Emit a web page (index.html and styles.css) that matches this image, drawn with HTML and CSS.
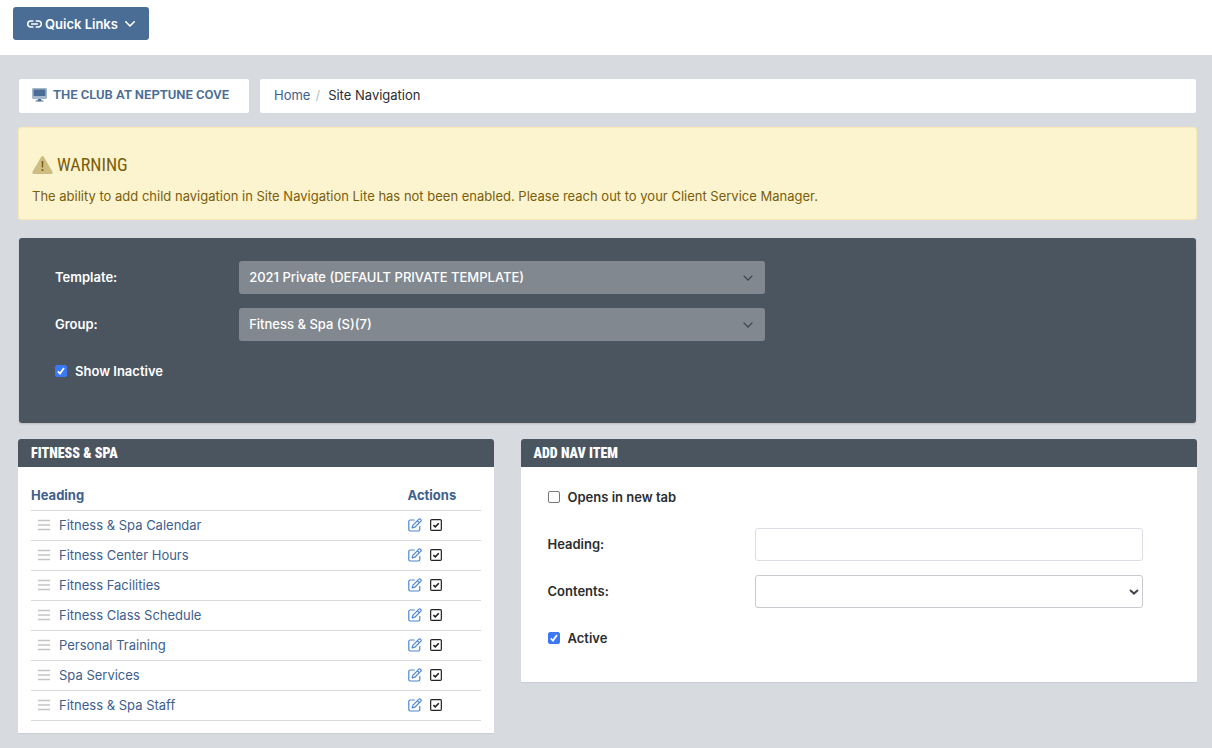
FILE: index.html
```html
<!DOCTYPE html>
<html lang="en">
<head>
<meta charset="utf-8">
<meta name="viewport" content="width=device-width, initial-scale=1">
<title>Site Navigation</title>
<link rel="stylesheet" href="styles.css">
</head>
<body>
<svg class="sprite" aria-hidden="true">
  <symbol id="grip" viewBox="0 0 12 12"><path d="M0 1.5h12M0 6h12M0 10.5h12" stroke="currentColor" stroke-width="1.3" fill="none"/></symbol>
  <symbol id="edit" viewBox="0 0 14 14"><g fill="none" stroke="currentColor" stroke-width="1.2" stroke-linejoin="round" stroke-linecap="round"><path d="M6.3 2H2.2Q.8 2 .8 3.4v8.2Q.8 13 2.2 13h8.2q1.4 0 1.4-1.4V8.4"/><path d="M4.2 9.8l.6-2.5 5.9-5.9q1-1 2 0t0 2L6.8 9.2zM9.4 2.8l1.9 1.9"/></g></symbol>
  <symbol id="check" viewBox="0 0 12 12"><g fill="none" stroke="currentColor"><rect x=".65" y=".65" width="10.7" height="10.7" rx="1.2" stroke-width="1.2"/><path d="M3.4 6.1l1.9 1.8 3.5-3.7" stroke-width="1.6"/></g></symbol>
</svg>

<header class="topbar">
  <button class="quick" type="button">
    <svg width="15" height="8" viewBox="0 0 15 8" fill="none" stroke="currentColor" stroke-width="1.5" stroke-linecap="round"><path d="M5.8 1H3.7a3 3 0 0 0 0 6h2.1M9.2 1h2.1a3 3 0 0 1 0 6H9.2M4.6 4h5.8"/></svg>
    <span>Quick Links</span>
    <svg class="quick-caret" width="10" height="6" viewBox="0 0 10 6" fill="none" stroke="currentColor" stroke-width="1.6" stroke-linecap="round" stroke-linejoin="round"><path d="M.8.8L5 5 9.2.8"/></svg>
  </button>
</header>

<main class="page">
  <div class="crumbs">
    <a class="club" href="#">
      <svg width="15" height="14" viewBox="0 0 15 14"><path fill="#a6b7cb" d="M1.3 0h12.4Q15 0 15 1.3v8.4q0 1.3-1.3 1.3H1.3Q0 11 0 9.700V1.300Q0 0 1.300 0z"/><path fill="#4a6d95" d="M1.600 1.500h11.800V8H1.600zM6 11h3l.5 1.500H11q.5 0 .5.500t-.5.500H4q-.5 0-.5-.500t.5-.500h1.500z"/></svg>
      <span>THE CLUB AT NEPTUNE COVE</span>
    </a>
    <nav class="trail" aria-label="Breadcrumb"><a href="#">Home</a><span class="slash">/</span><span>Site Navigation</span></nav>
  </div>

  <section class="alert">
    <h2 class="alert-title">
      <svg width="21" height="18" viewBox="0 0 21 18"><path fill="#cdbd83" d="M9.100 1q1.400-2 2.800 0l8.600 14.800q.8 1.900-1.200 2.200H1.700q-2-.3-1.200-2.200z"/><path fill="#7a5e0b" d="M9.600 5h1.800l-.3 6.500H9.900zM9.600 13.200h1.800V15H9.600z"/></svg>
      <span>WARNING</span>
    </h2>
    <p class="alert-text">The ability to add child navigation in Site Navigation Lite has not been enabled. Please reach out to your Client Service Manager.</p>
  </section>

  <form class="filters">
    <div class="row">
      <label for="template">Template:</label>
      <div class="field"><select id="template" class="control dark"><option>2021 Private (DEFAULT PRIVATE TEMPLATE)</option></select></div>
    </div>
    <div class="row">
      <label for="group">Group:</label>
      <div class="field"><select id="group" class="control dark"><option>Fitness &amp; Spa (S)(7)</option></select></div>
    </div>
    <label class="tick"><input type="checkbox" checked><span>Show Inactive</span></label>
  </form>

  <div class="columns">
    <section class="card list">
      <h3 class="card-title">FITNESS &amp; SPA</h3>
      <div class="list-body">
        <table class="nav-table">
          <thead><tr><th>Heading</th><th class="actions">Actions</th></tr></thead>
          <tbody>
            <tr><td><svg class="grip"><use href="#grip"/></svg><a href="#">Fitness &amp; Spa Calendar</a></td><td><button type="button" class="icon edit" aria-label="Edit"><svg><use href="#edit"/></svg></button><button type="button" class="icon check" aria-label="Active"><svg><use href="#check"/></svg></button></td></tr>
            <tr><td><svg class="grip"><use href="#grip"/></svg><a href="#">Fitness Center Hours</a></td><td><button type="button" class="icon edit" aria-label="Edit"><svg><use href="#edit"/></svg></button><button type="button" class="icon check" aria-label="Active"><svg><use href="#check"/></svg></button></td></tr>
            <tr><td><svg class="grip"><use href="#grip"/></svg><a href="#">Fitness Facilities</a></td><td><button type="button" class="icon edit" aria-label="Edit"><svg><use href="#edit"/></svg></button><button type="button" class="icon check" aria-label="Active"><svg><use href="#check"/></svg></button></td></tr>
            <tr><td><svg class="grip"><use href="#grip"/></svg><a href="#">Fitness Class Schedule</a></td><td><button type="button" class="icon edit" aria-label="Edit"><svg><use href="#edit"/></svg></button><button type="button" class="icon check" aria-label="Active"><svg><use href="#check"/></svg></button></td></tr>
            <tr><td><svg class="grip"><use href="#grip"/></svg><a href="#">Personal Training</a></td><td><button type="button" class="icon edit" aria-label="Edit"><svg><use href="#edit"/></svg></button><button type="button" class="icon check" aria-label="Active"><svg><use href="#check"/></svg></button></td></tr>
            <tr><td><svg class="grip"><use href="#grip"/></svg><a href="#">Spa Services</a></td><td><button type="button" class="icon edit" aria-label="Edit"><svg><use href="#edit"/></svg></button><button type="button" class="icon check" aria-label="Active"><svg><use href="#check"/></svg></button></td></tr>
            <tr><td><svg class="grip"><use href="#grip"/></svg><a href="#">Fitness &amp; Spa Staff</a></td><td><button type="button" class="icon edit" aria-label="Edit"><svg><use href="#edit"/></svg></button><button type="button" class="icon check" aria-label="Active"><svg><use href="#check"/></svg></button></td></tr>
          </tbody>
        </table>
      </div>
    </section>

    <section class="card add">
      <h3 class="card-title">ADD NAV ITEM</h3>
      <form class="add-body">
        <label class="tick first"><input type="checkbox"><span>Opens in new tab</span></label>
        <div class="row">
          <label for="heading">Heading:</label>
          <div class="field"><input id="heading" type="text" class="control"></div>
        </div>
        <div class="row">
          <label for="contents">Contents:</label>
          <div class="field"><select id="contents" class="control light"><option></option></select></div>
        </div>
        <label class="tick"><input type="checkbox" checked><span>Active</span></label>
      </form>
    </section>
  </div>
</main>
</body>
</html>
```

FILE: styles.css
```css
* { box-sizing: border-box; }

body {
  margin: 0;
  min-height: 100vh;
  background: #d7dbe0;
  color: #2b2d30;
  font-family: Inter, Roboto, sans-serif;
  font-size: 13px;
  line-height: 20px;
}

a { color: #40608c; text-decoration: none; }
button, input, select { font: inherit; }
svg { display: block; flex: none; }
.sprite { position: absolute; width: 0; height: 0; }

.topbar {
  height: 55px;
  padding: 7px 13px;
  background: #fff;
}

.quick {
  display: flex;
  align-items: center;
  gap: 3px;
  width: 136px;
  height: 33px;
  padding: 0 14px;
  border: 0;
  border-radius: 3px;
  background: #4a6d95;
  color: #fff;
  font-weight: 600;
}
.quick-caret { margin-left: auto; }

.page { padding: 24px 15px 14px 18px; }

.crumbs {
  display: flex;
  gap: 11px;
  padding: 0 1px;
}
.club, .trail {
  display: flex;
  align-items: center;
  height: 34px;
  padding: 0 14px 2px;
  border-radius: 2px;
  background: #fff;
}
.club {
  gap: 6px;
  width: 230px;
  padding-left: 13px;
  color: #4a6d95;
  font-family: Roboto, sans-serif;
  font-weight: 600;
  white-space: nowrap;
}
.trail { flex: 1; }
.slash { margin: 0 8px 0 5px; color: #b9bcc0; }

.alert {
  margin-top: 14px;
  padding: 24px 13px 12px;
  border: 1px solid #fbe9b5;
  border-radius: 3px;
  background: #fcf3cf;
  color: #7a5e0b;
}
.alert-title {
  display: flex;
  align-items: center;
  gap: 4px;
  margin: 0 0 7px;
  font: 400 18px/26px "Roboto Condensed", "Liberation Sans Narrow", sans-serif;
}
.alert-text { margin: 0; line-height: 22px; }

.filters {
  margin: 18px 1px 16px;
  padding: 23px 36px 36px;
  border-radius: 3px;
  background: #4b555f;
  box-shadow: 0 1px 2px #b9bdc2;
  color: #fff;
}
.row {
  display: grid;
  grid-template-columns: 2fr 6fr 4fr;
  align-items: center;
  margin-bottom: 14px;
  font-weight: 600;
}
.row label { padding-bottom: 2px; }
.field { padding-right: 27px; }

.control {
  display: block;
  width: 100%;
  height: 33px;
  padding: 0 10px;
  border: 1px solid #dddde6;
  border-radius: 3px;
  background: #fff;
  font-weight: 500;
}
select.control {
  appearance: none;
  background-repeat: no-repeat;
}
.dark {
  padding-bottom: 2px;
  border: 0;
  background-color: #82888f;
  background-image: url("data:image/svg+xml,%3Csvg xmlns='http://www.w3.org/2000/svg' width='10' height='6' fill='none' stroke='%23414750' stroke-width='1.300'%3E%3Cpath d='M.6.6L5 5 9.400.6'/%3E%3C/svg%3E");
  background-position: right 12px center;
  color: #fff;
}
.light {
  border-color: #c9c9d0;
  background-image: url("data:image/svg+xml,%3Csvg xmlns='http://www.w3.org/2000/svg' width='10' height='6' fill='none' stroke='%23414750' stroke-width='2'%3E%3Cpath d='M1 1L5 4.600 9 1'/%3E%3C/svg%3E");
  background-position: right 3px center;
}

.tick {
  display: flex;
  align-items: center;
  gap: 8px;
  height: 32px;
  font-weight: 600;
}
.tick input {
  appearance: none;
  width: 12px;
  height: 12px;
  margin: 0;
  border: 1px solid #77777c;
  border-radius: 2px;
  background: #fff;
}
.tick input:checked {
  border-color: #3b78f6;
  background: #3b78f6 url("data:image/svg+xml,%3Csvg xmlns='http://www.w3.org/2000/svg' viewBox='0 0 10 10' fill='none' stroke='white' stroke-width='1.700'%3E%3Cpath d='M1.800 5.400L4 7.600 8 2'/%3E%3C/svg%3E") center / 10px 10px;
}

.columns {
  display: grid;
  grid-template-columns: repeat(12, minmax(0, 1fr));
  align-items: start;
  gap: 27px;
}
.card {
  background: #fff;
  border-radius: 3px 3px 0 0;
  box-shadow: 0 1px 1px #c8ccd1;
}
.list { grid-column: span 5; }
.add { grid-column: span 7; }
.card-title {
  height: 28px;
  margin: 0;
  padding: 0 13px;
  border-radius: 3px 3px 0 0;
  background: #4b555f;
  color: #fff;
  font: 900 14px/28px "Roboto Condensed", "Liberation Sans Narrow", sans-serif;
}

.list-body { padding: 13px 13px 12px; }
.nav-table {
  width: 100%;
  border-collapse: collapse;
  table-layout: fixed;
}
.nav-table th {
  height: 30px;
  padding: 0;
  color: #40608c;
  font-weight: 700;
  text-align: left;
}
.nav-table .actions { width: 73px; }
.nav-table tr { border-bottom: 1px solid #d8dadd; }
.nav-table td {
  height: 30px;
  padding: 0 0 2px;
  line-height: 18px;
}
.grip, .nav-table td a { display: inline-block; vertical-align: middle; }
.grip {
  width: 12px;
  height: 12px;
  margin: 0 9px 0 7px;
  color: #c4c4c4;
}
.icon {
  display: inline-block;
  padding: 0;
  border: 0;
  background: none;
  vertical-align: middle;
}
.edit { margin-right: 8px; color: #4c86cf; }
.edit svg { width: 14px; height: 14px; }
.check { color: #222; }
.check svg { width: 12px; height: 12px; }

.add-body { padding: 14px 27px 28px; }
.first { margin-bottom: 15px; }
.add .row { grid-template-columns: 4fr 8fr; }
```
